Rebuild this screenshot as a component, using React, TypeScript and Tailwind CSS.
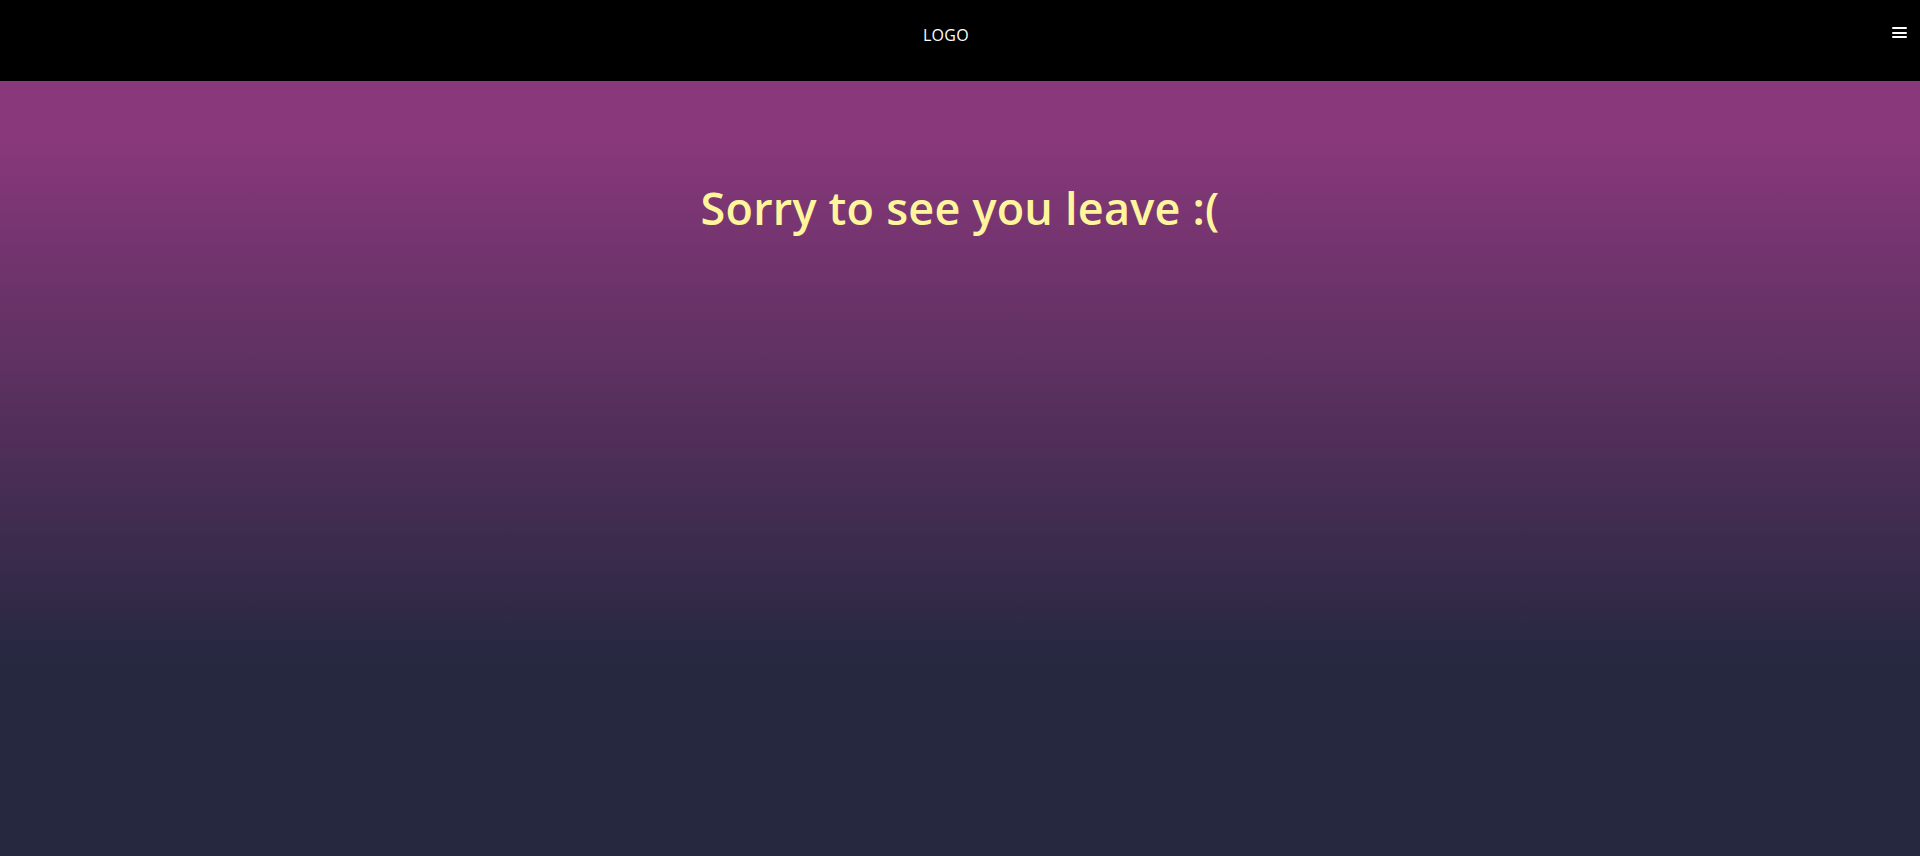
import React from "react";

export default function App() {
  return (
    <div className="flex h-screen flex-col font-['Open_Sans',sans-serif]">
      <header className="flex h-[81px] shrink-0 items-start bg-black">
        <div className="flex flex-1 justify-center pt-[26px]">
          <span className="text-[16px] leading-[18px] tracking-[0.3px] text-white">LOGO</span>
        </div>
        <button className="mr-[13px] mt-[27px] flex w-[15px] flex-col gap-[2.5px]" aria-label="menu">
          <span className="block h-[2px] w-[15px] rounded-[1px] bg-white" />
          <span className="block h-[2px] w-[15px] rounded-[1px] bg-white" />
          <span className="block h-[2px] w-[15px] rounded-[1px] bg-white" />
        </button>
      </header>
      <main className="flex flex-1 flex-col items-center bg-[linear-gradient(to_bottom,#8a387c_6%,#262840_75%)] pt-[100px]">
        <h1 className="text-[45px] font-semibold leading-[54px] tracking-[0.2px] text-[#fff59d]">Sorry to see you leave :(</h1>
      </main>
    </div>
  );
}
